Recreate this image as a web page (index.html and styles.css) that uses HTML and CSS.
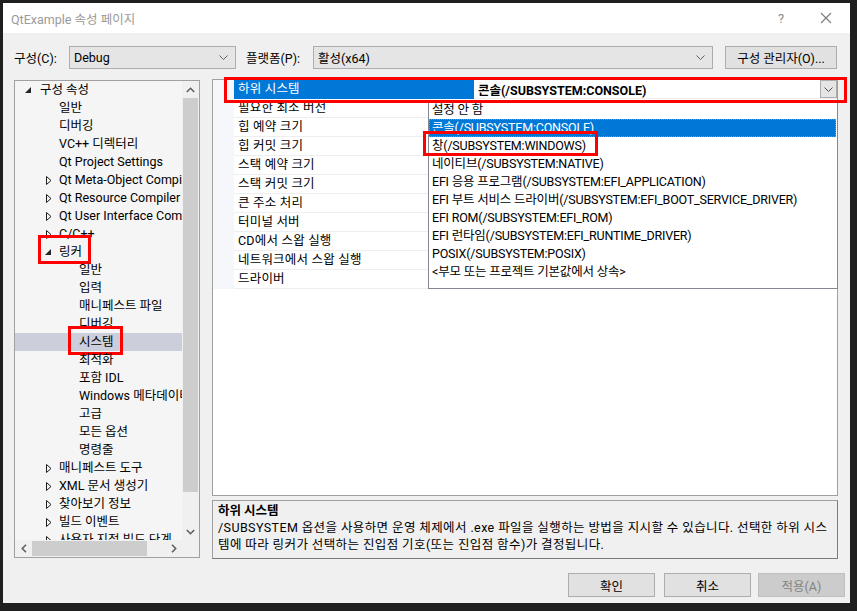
FILE: index.html
```html
<!DOCTYPE html>
<html lang="ko">
<head>
    <meta charset="UTF-8">
    <title>QtExample 속성 페이지</title>
    <link rel="stylesheet" href="styles.css">
</head>
<body>
<div class="window">
    <div class="titlebar">
        <span class="title">QtExample 속성 페이지</span>
        <span class="tb_help">?</span>
        <span class="tb_close">
            <svg width="12" height="12" viewBox="0 0 12 12"><path d="M1 1 L11 11 M11 1 L1 11" stroke="#7a7a7a" stroke-width="1.1" fill="none"/></svg>
        </span>
    </div>
    <div class="content">
        <div class="toolbar">
            <span class="lbl">구성(C):</span>
            <div class="combo combo_conf">
                <span>Debug</span>
                <svg class="chev" width="9" height="5" viewBox="0 0 9 5"><path d="M0.5 0.5 L4.5 4.5 L8.5 0.5" stroke="#606060" fill="none"/></svg>
            </div>
            <span class="lbl lbl_plat">플랫폼(P):</span>
            <div class="combo combo_plat">
                <span>활성(x64)</span>
                <svg class="chev" width="9" height="5" viewBox="0 0 9 5"><path d="M0.5 0.5 L4.5 4.5 L8.5 0.5" stroke="#606060" fill="none"/></svg>
            </div>
            <div class="btn btn_mgr">구성 관리자(O)...</div>
        </div>

        <div class="main">
            <div class="tree">
                <div class="tree_body">
                    <div class="tree_rows">
                        <div class="trow lv0"><span class="arr"><svg width="6" height="6" viewBox="0 0 6 6"><path d="M6 0 L6 6 L0 6Z" fill="#262626"/></svg></span>구성 속성</div>
                        <div class="trow lv1"><span class="arr"></span>일반</div>
                        <div class="trow lv1"><span class="arr"></span>디버깅</div>
                        <div class="trow lv1"><span class="arr"></span>VC++ 디렉터리</div>
                        <div class="trow lv1"><span class="arr"></span>Qt Project Settings</div>
                        <div class="trow lv1"><span class="arr"><svg width="6" height="9" viewBox="0 0 6 9"><path d="M0.5 0.5 L5 4.5 L0.5 8.5Z" fill="none" stroke="#1e1e1e"/></svg></span>Qt Meta-Object Compiler</div>
                        <div class="trow lv1"><span class="arr"><svg width="6" height="9" viewBox="0 0 6 9"><path d="M0.5 0.5 L5 4.5 L0.5 8.5Z" fill="none" stroke="#1e1e1e"/></svg></span>Qt Resource Compiler</div>
                        <div class="trow lv1"><span class="arr"><svg width="6" height="9" viewBox="0 0 6 9"><path d="M0.5 0.5 L5 4.5 L0.5 8.5Z" fill="none" stroke="#1e1e1e"/></svg></span>Qt User Interface Compiler</div>
                        <div class="trow lv1"><span class="arr"><svg width="6" height="9" viewBox="0 0 6 9"><path d="M0.5 0.5 L5 4.5 L0.5 8.5Z" fill="none" stroke="#1e1e1e"/></svg></span>C/C++</div>
                        <div class="trow lv1"><span class="arr"><svg width="6" height="6" viewBox="0 0 6 6"><path d="M6 0 L6 6 L0 6Z" fill="#262626"/></svg></span>링커<span class="mark mark_linker"></span></div>
                        <div class="trow lv2"><span class="arr"></span>일반</div>
                        <div class="trow lv2"><span class="arr"></span>입력</div>
                        <div class="trow lv2"><span class="arr"></span>매니페스트 파일</div>
                        <div class="trow lv2"><span class="arr"></span>디버깅</div>
                        <div class="trow lv2 selected"><span class="arr"></span>시스템<span class="mark mark_system"></span></div>
                        <div class="trow lv2"><span class="arr"></span>최적화</div>
                        <div class="trow lv2"><span class="arr"></span>포함 IDL</div>
                        <div class="trow lv2"><span class="arr"></span>Windows 메타데이터</div>
                        <div class="trow lv2"><span class="arr"></span>고급</div>
                        <div class="trow lv2"><span class="arr"></span>모든 옵션</div>
                        <div class="trow lv2"><span class="arr"></span>명령줄</div>
                        <div class="trow lv1"><span class="arr"><svg width="6" height="9" viewBox="0 0 6 9"><path d="M0.5 0.5 L5 4.5 L0.5 8.5Z" fill="none" stroke="#1e1e1e"/></svg></span>매니페스트 도구</div>
                        <div class="trow lv1"><span class="arr"><svg width="6" height="9" viewBox="0 0 6 9"><path d="M0.5 0.5 L5 4.5 L0.5 8.5Z" fill="none" stroke="#1e1e1e"/></svg></span>XML 문서 생성기</div>
                        <div class="trow lv1"><span class="arr"><svg width="6" height="9" viewBox="0 0 6 9"><path d="M0.5 0.5 L5 4.5 L0.5 8.5Z" fill="none" stroke="#1e1e1e"/></svg></span>찾아보기 정보</div>
                        <div class="trow lv1"><span class="arr"><svg width="6" height="9" viewBox="0 0 6 9"><path d="M0.5 0.5 L5 4.5 L0.5 8.5Z" fill="none" stroke="#1e1e1e"/></svg></span>빌드 이벤트</div>
                        <div class="trow lv1"><span class="arr"><svg width="6" height="9" viewBox="0 0 6 9"><path d="M0.5 0.5 L5 4.5 L0.5 8.5Z" fill="none" stroke="#1e1e1e"/></svg></span>사용자 지정 빌드 단계</div>
                    </div>
                    <div class="vscroll">
                        <div class="sb_btn"><svg width="9" height="6" viewBox="0 0 9 6"><path d="M0.8 5 L4.5 1.3 L8.2 5" stroke="#606060" stroke-width="1.6" fill="none"/></svg></div>
                        <div class="vthumb"></div>
                        <div class="vtrack"></div>
                        <div class="sb_btn"><svg width="9" height="6" viewBox="0 0 9 6"><path d="M0.8 1 L4.5 4.7 L8.2 1" stroke="#606060" stroke-width="1.6" fill="none"/></svg></div>
                    </div>
                </div>
                <div class="hscroll">
                    <div class="sb_hbtn"><svg width="6" height="9" viewBox="0 0 6 9"><path d="M5 0.8 L1.3 4.5 L5 8.2" stroke="#606060" stroke-width="1.6" fill="none"/></svg></div>
                    <div class="hthumb"></div>
                    <div class="htrack"></div>
                    <div class="sb_hbtn"><svg width="6" height="9" viewBox="0 0 6 9"><path d="M1 0.8 L4.7 4.5 L1 8.2" stroke="#606060" stroke-width="1.6" fill="none"/></svg></div>
                    <div class="corner"></div>
                </div>
            </div>

            <div class="right">
                <div class="grid">
                    <div class="prow">
                        <div class="gut"></div>
                        <div class="pname sel">하위 시스템</div>
                        <div class="pval">
                            <span class="val_text">콘솔(/SUBSYSTEM:CONSOLE)</span>
                            <span class="dd_btn"><svg width="9" height="5" viewBox="0 0 9 5"><path d="M0.5 0.5 L4.5 4.5 L8.5 0.5" stroke="#505050" fill="none"/></svg></span>
                        </div>
                    </div>
                    <div class="prow"><div class="gut"></div><div class="pname">필요한 최소 버전</div><div class="pval"></div></div>
                    <div class="prow"><div class="gut"></div><div class="pname">힙 예약 크기</div><div class="pval"></div></div>
                    <div class="prow"><div class="gut"></div><div class="pname">힙 커밋 크기</div><div class="pval"></div></div>
                    <div class="prow"><div class="gut"></div><div class="pname">스택 예약 크기</div><div class="pval"></div></div>
                    <div class="prow"><div class="gut"></div><div class="pname">스택 커밋 크기</div><div class="pval"></div></div>
                    <div class="prow"><div class="gut"></div><div class="pname">큰 주소 처리</div><div class="pval"></div></div>
                    <div class="prow"><div class="gut"></div><div class="pname">터미널 서버</div><div class="pval"></div></div>
                    <div class="prow"><div class="gut"></div><div class="pname">CD에서 스왑 실행</div><div class="pval"></div></div>
                    <div class="prow"><div class="gut"></div><div class="pname">네트워크에서 스왑 실행</div><div class="pval"></div></div>
                    <div class="prow"><div class="gut"></div><div class="pname">드라이버</div><div class="pval"></div></div>

                    <span class="mark mark_row"></span>

                    <div class="droplist">
                        <div class="ditem">설정 안 함</div>
                        <div class="ditem dsel">콘솔(/SUBSYSTEM:CONSOLE)</div>
                        <div class="ditem">창(/SUBSYSTEM:WINDOWS)<span class="mark mark_win"></span></div>
                        <div class="ditem">네이티브(/SUBSYSTEM:NATIVE)</div>
                        <div class="ditem">EFI 응용 프로그램(/SUBSYSTEM:EFI_APPLICATION)</div>
                        <div class="ditem">EFI 부트 서비스 드라이버(/SUBSYSTEM:EFI_BOOT_SERVICE_DRIVER)</div>
                        <div class="ditem">EFI ROM(/SUBSYSTEM:EFI_ROM)</div>
                        <div class="ditem">EFI 런타임(/SUBSYSTEM:EFI_RUNTIME_DRIVER)</div>
                        <div class="ditem">POSIX(/SUBSYSTEM:POSIX)</div>
                        <div class="ditem">&lt;부모 또는 프로젝트 기본값에서 상속&gt;</div>
                    </div>
                </div>
                <div class="desc">
                    <div class="desc_title">하위 시스템</div>
                    <div class="desc_text">/SUBSYSTEM 옵션을 사용하면 운영 체제에서 .exe 파일을 실행하는 방법을 지시할 수 있습니다. 선택한 하위 시스<br>템에 따라 링커가 선택하는 진입점 기호(또는 진입점 함수)가 결정됩니다.</div>
                </div>
            </div>
        </div>

        <div class="footer">
            <div class="btn btn_ok">확인</div>
            <div class="btn btn_cancel">취소</div>
            <div class="btn btn_apply disabled">적용(A)</div>
        </div>
    </div>
</div>
</body>
</html>
```

FILE: styles.css
```css
*{
    margin: 0px;
    padding: 0px;
    box-sizing: border-box;
}
body{
    background: #1f1f1f;
    font-family: Roboto, "Noto Sans CJK KR", sans-serif;
    font-size: 12.5px;
    color: #000;
    width: 857px;
    height: 611px;
    overflow: hidden;
}
.window{
    margin: 3px 0 0 3px;
    width: 847px;
    height: 600px;
    display: flex;
    flex-direction: column;
    background: #f0f0f0;
}
.titlebar{
    height: 30px;
    background: #fff;
    display: flex;
    align-items: center;
    padding-left: 8px;
}
.title{
    color: #9a9a9a;
    flex: 1;
}
.tb_help{
    color: #8a8a8a;
    font-size: 13px;
    width: 46px;
    text-align: center;
}
.tb_close{
    width: 46px;
    display: flex;
    justify-content: center;
    padding-right: 2px;
}
.content{
    flex: 1;
    display: flex;
    flex-direction: column;
}

/* top row */
.toolbar{
    margin-top: 13px;
    height: 23px;
    display: flex;
    align-items: center;
    padding-left: 11px;
}
.lbl{
    width: 55px;
}
.lbl_plat{
    margin-left: 10px;
    width: 67px;
}
.combo{
    height: 23px;
    background: #e5e5e5;
    border: 1px solid #adadad;
    display: flex;
    align-items: center;
    padding-left: 4px;
    padding-right: 7px;
}
.combo span{
    flex: 1;
}
.combo_conf{
    width: 167px;
}
.combo_plat{
    width: 400px;
}
.btn{
    height: 24px;
    background: #e1e1e1;
    border: 1px solid #adadad;
    display: flex;
    align-items: center;
    justify-content: center;
}
.btn_mgr{
    margin-left: 12px;
    width: 112px;
    height: 23px;
}

/* main area */
.main{
    margin-top: 10px;
    height: 480px;
    display: flex;
    padding-left: 11px;
}
.tree{
    margin-top: 1px;
    width: 186px;
    height: 478px;
    border: 1px solid #a0a0a0;
    background: #f5f5f5;
    display: flex;
    flex-direction: column;
}
.tree_body{
    flex: 1;
    display: flex;
    overflow: hidden;
}
.tree_rows{
    width: 167px;
    overflow: hidden;
}
.trow{
    height: 18px;
    line-height: 18px;
    white-space: nowrap;
    display: flex;
    align-items: center;
    position: relative;
}
.trow .arr{
    width: 15px;
    flex: none;
    display: flex;
    align-items: center;
}
.lv0{
    padding-left: 10px;
}
.lv1{
    padding-left: 29px;
}
.lv2{
    padding-left: 49px;
}
.lv1 .arr svg[height="9"]{
    margin-left: 2px;
}
.lv1 .arr svg[height="6"]{
    margin-left: 1px;
}
.selected{
    background: #cccedb;
}
.vscroll{
    width: 17px;
    background: #f0f0f0;
    display: flex;
    flex-direction: column;
}
.sb_btn{
    height: 17px;
    display: flex;
    align-items: center;
    justify-content: center;
}
.vthumb{
    height: 394px;
    background: #cdcdcd;
    margin: 0 1px;
}
.vtrack{
    flex: 1;
}
.hscroll{
    height: 17px;
    display: flex;
    background: #f0f0f0;
}
.sb_hbtn{
    width: 17px;
    display: flex;
    align-items: center;
    justify-content: center;
}
.hthumb{
    width: 115px;
    background: #cdcdcd;
    margin: 1px 0;
}
.htrack{
    width: 18px;
}
.corner{
    flex: 1;
    background: #f0f0f0;
}

.right{
    margin-left: 12px;
    width: 626px;
    display: flex;
    flex-direction: column;
}
.grid{
    height: 417px;
    border: 1px solid #a0a0a0;
    background: #fff;
    position: relative;
}
.prow{
    height: 19px;
    display: flex;
}
.gut{
    width: 21px;
    background: #f5f7fb;
}
.pname{
    width: 240px;
    padding-left: 4px;
    line-height: 18px;
    border-bottom: 1px solid #eeeeee;
    white-space: nowrap;
    letter-spacing: 0.2px;
}
.pname.sel{
    background: #0078d7;
    color: #fff;
    border-bottom: 1px solid #0078d7;
}
.pval{
    flex: 1;
    border-bottom: 1px solid #eeeeee;
    display: flex;
    align-items: center;
    padding-left: 4px;
}
.val_text{
    flex: 1;
    font-weight: bold;
}
.dd_btn{
    width: 17px;
    height: 18px;
    background: #e5e5e5;
    border: 1px solid #adadad;
    display: flex;
    align-items: center;
    justify-content: center;
}
.droplist{
    position: absolute;
    left: 215px;
    top: 20px;
    width: 410px;
    height: 189px;
    border: 1px solid #828790;
    background: #fff;
}
.ditem{
    height: 18px;
    line-height: 18px;
    padding-left: 3px;
    white-space: nowrap;
    position: relative;
    letter-spacing: -0.2px;
}
.dsel{
    background: #0078d7;
    color: #fff;
    margin-right: 1px;
    outline: 1px dotted #d08040;
    outline-offset: -1px;
}

.desc{
    margin-top: 4px;
    height: 59px;
    border: 1px solid #a0a0a0;
    border-right-color: #7a7a7a;
    border-bottom-color: #7a7a7a;
    padding: 1px 5px;
    line-height: 17px;
}
.desc_title{
    font-weight: bold;
}
.desc_text{
    white-space: nowrap;
    letter-spacing: 0.4px;
}

/* buttons */
.footer{
    margin-top: 14px;
    display: flex;
    padding-left: 565px;
}
.btn_ok, .btn_cancel, .btn_apply{
    width: 87px;
}
.btn_cancel{
    margin-left: 9px;
}
.btn_apply{
    margin-left: 7px;
}
.disabled{
    background: #cccccc;
    border-color: #bfbfbf;
    color: #838383;
}

/* red annotation boxes */
.mark{
    position: absolute;
    border: 3px solid #ff0000;
    pointer-events: none;
}
.mark_linker{
    left: 23px;
    top: -8px;
    width: 53px;
    height: 29px;
}
.mark_system{
    left: 53px;
    top: -7px;
    width: 55px;
    height: 29px;
}
.mark_row{
    left: 11px;
    top: -3px;
    width: 623px;
    height: 26px;
    z-index: 2;
}
.mark_win{
    left: -6px;
    top: -6px;
    width: 175px;
    height: 25px;
}
```
